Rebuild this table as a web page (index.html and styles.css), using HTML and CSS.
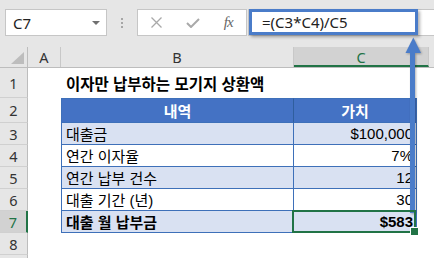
FILE: index.html
```html
<!DOCTYPE html>
<html lang="ko">
<head>
<meta charset="utf-8">
<link rel="stylesheet" href="styles.css">
</head>
<body>
<div class="toolbar">
  <div class="namebox"><span>C7</span><span class="caret"></span></div>
  <div class="dots"><i></i><i></i><i></i></div>
  <div class="fbtns">
    <span class="btn"><svg width="11" height="11" viewBox="0 0 11 11"><path d="M0.5 0.5L10.5 10.5M10.5 0.5L0.5 10.5" stroke="#A9A9A9" stroke-width="1.3" fill="none"/></svg></span>
    <span class="btn"><svg width="14" height="10" viewBox="0 0 14 10"><path d="M1 5L5 9L13 1" stroke="#A9A9A9" stroke-width="2" fill="none"/></svg></span>
    <span class="btn fx">fx</span>
  </div>
  <div class="formula">=(C3*C4)/C5</div>
</div>
<div class="colheads">
  <div class="ch corner"><span class="tri"></span></div>
  <div class="ch cha">A</div>
  <div class="ch chb">B</div>
  <div class="ch chc sel">C</div>
  <div class="ch chd"></div>
</div>
<div class="sheet">
  <div class="rn r1">1</div><div class="cell"></div><div class="title">이자만 납부하는 모기지 상환액</div><div class="cell"></div>

  <div class="rn">2</div><div class="cell"></div><div class="hd hb">내역</div><div class="hd hc">가치</div><div class="cell"></div>

  <div class="rn">3</div><div class="cell"></div><div class="tb band">대출금</div><div class="tc band">$100,000</div><div class="cell"></div>

  <div class="rn">4</div><div class="cell"></div><div class="tb">연간 이자율</div><div class="tc">7%</div><div class="cell"></div>

  <div class="rn">5</div><div class="cell"></div><div class="tb band">연간 납부 건수</div><div class="tc band">12</div><div class="cell"></div>

  <div class="rn">6</div><div class="cell"></div><div class="tb">대출 기간 (년)</div><div class="tc">30</div><div class="cell"></div>

  <div class="rn rsel">7</div><div class="cell"></div><div class="tb band bold">대출 월 납부금</div><div class="tc band bold active">$583</div><div class="cell"></div>

  <div class="rn">8</div><div class="cell"></div><div class="cell"></div><div class="cell"></div><div class="cell"></div>

  <div class="rn"></div><div class="cell"></div><div class="cell"></div><div class="cell"></div><div class="cell"></div>
</div>
<div class="hilite"></div>
<svg class="arrow" width="18" height="180" viewBox="404 36 18 180">
  <polygon points="413.3,37.5 405.5,53 421,53" fill="#4A7CC9"/>
  <rect x="410" y="52" width="5" height="161" fill="#4A7CC9"/>
</svg>
</body>
</html>
```
FILE: styles.css
```css
* { box-sizing: border-box; margin: 0; padding: 0; }
html, body { width: 434px; height: 258px; overflow: hidden; background: #fff; }
body { position: relative; font-family: "Liberation Sans", "Noto Sans CJK KR", sans-serif; color: #000; }

.toolbar { height: 47px; background: #E6E6E6; display: flex; align-items: flex-start; padding-top: 9px; }
.namebox { margin-left: 5px; width: 102px; height: 27px; background: #fff; border: 1px solid #C6C6C6; display: flex; align-items: center; justify-content: space-between; padding: 0 6px 0 7px; font-family: "Noto Sans", sans-serif; font-size: 15px; color: #222; }
.caret { width: 0; height: 0; border-left: 4px solid transparent; border-right: 4px solid transparent; border-top: 4px solid #707070; }
.dots { width: 30px; display: flex; flex-direction: column; align-items: center; gap: 2px; padding-top: 9px; }
.dots i { display: block; width: 2px; height: 2px; background: #A6A6A6; }
.fbtns { width: 110px; height: 27px; background: #fff; border: 1px solid #C6C6C6; display: flex; align-items: center; padding-left: 1px; }
.btn { width: 36px; display: flex; justify-content: center; align-items: center; }
.fx { font-family: "Liberation Serif", serif; font-style: italic; font-size: 15px; color: #666; letter-spacing: -1px; }
.formula { flex: 1; height: 27px; margin-left: 1px; background: #fff; border: 1px solid #C6C6C6; border-right: none; padding-left: 13px; font-family: "Noto Sans", sans-serif; font-size: 15px; line-height: 25px; color: #222; }

.colheads { display: flex; height: 21px; background: #E6E6E6; border-bottom: 1px solid #BDBDBD; }
.ch { height: 20px; border-right: 1px solid #C8C8C8; display: flex; align-items: center; justify-content: center; font-family: "Noto Sans", sans-serif; font-size: 14.5px; color: #333; }
.corner { width: 28px; position: relative; border-right-color: #BDBDBD; }
.tri { position: absolute; right: 3px; bottom: 3px; width: 0; height: 0; border-left: 13px solid transparent; border-bottom: 12px solid #BDBDBD; }
.cha { width: 33px; }
.chb { width: 233px; }
.chc { width: 135px; }
.chd { flex: 1; border-right: none; }
.sel { background: #D2D2D2; color: #217346; border-bottom: 2px solid #217346; height: 20px; padding-top: 2px; }

.sheet { display: grid; grid-template-columns: 28px 33px 233px 123px 1fr; grid-template-rows: 30px 25px 22px 22px 22px 22px 22px 22px 22px; }
.rn { background: #E6E6E6; border-right: 1px solid #BDBDBD; border-bottom: 1px solid #D0D0D0; display: flex; align-items: center; justify-content: center; font-family: "Noto Sans", sans-serif; font-size: 14.5px; color: #333; }
.rsel { background: #D2D2D2; color: #217346; border-right: 2px solid #217346; }
.title { grid-column: 3 / 5; font-weight: bold; font-size: 15.5px; padding-left: 5px; display: flex; align-items: center; }

.hd { background: #4472C4; color: #fff; font-weight: bold; font-size: 15px; display: flex; align-items: center; justify-content: center; border-top: 1px solid #3E70B9; border-bottom: 1px solid #3E70B9; }
.hb { border-left: 1px solid #3E70B9; border-right: 1px solid #2F5E9E; }
.hc { border-right: 1px solid #3E70B9; }

.tb, .tc { font-size: 15px; display: flex; align-items: center; border-bottom: 1px solid #3E70B9; border-right: 1px solid #3E70B9; }
.tb { border-left: 1px solid #3E70B9; padding-left: 4px; }
.tc { justify-content: flex-end; padding-right: 3px; }
.band { background: #D9E1F2; }
.bold { font-weight: bold; }

.active { position: relative; }
.active::after { content: ""; position: absolute; left: -2px; top: -1px; right: 0; bottom: -1px; border: 2px solid #217346; z-index: 2; }
.active::before { content: ""; position: absolute; right: -3px; bottom: -4px; width: 7px; height: 7px; background: #217346; border: 1px solid #fff; z-index: 3; }

.hilite { position: absolute; left: 249px; top: 9px; width: 169px; height: 26px; border: 3px solid #4A7CC9; box-shadow: 2px 2px 3px rgba(0,0,0,0.3); }
.arrow { position: absolute; left: 404px; top: 36px; filter: drop-shadow(1px 1px 1px rgba(0,0,0,0.3)); }
```
